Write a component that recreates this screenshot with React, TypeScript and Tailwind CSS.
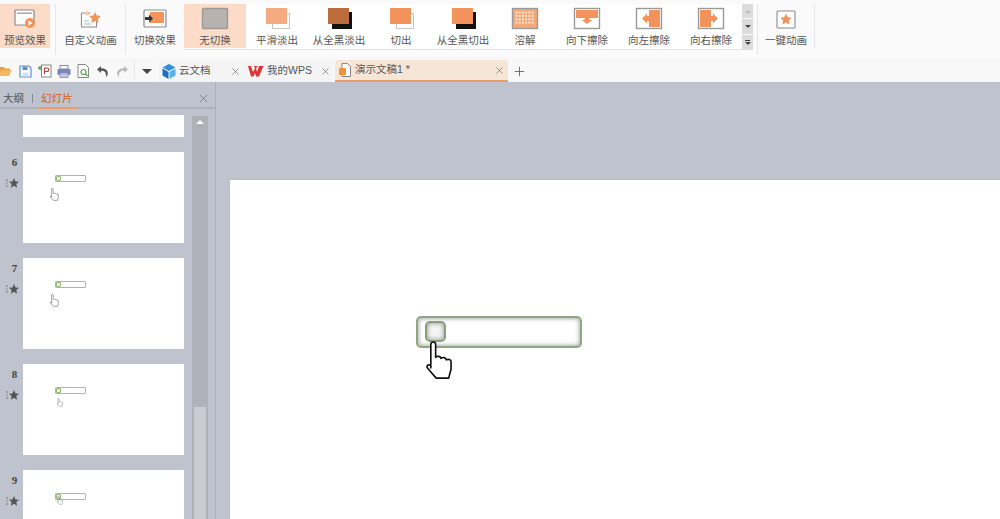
import { Plus, X } from "lucide-react";

const FONT = "font-['Liberation_Sans','Noto_Sans_CJK_SC',sans-serif]";

const ORANGE = "#f2935c";

const GALLERY = [
  { label: "无切换", kind: "none" },
  { label: "平滑淡出", kind: "fade" },
  { label: "从全黑淡出", kind: "fadeBlack" },
  { label: "切出", kind: "cut" },
  { label: "从全黑切出", kind: "cutBlack" },
  { label: "溶解", kind: "dissolve" },
  { label: "向下擦除", kind: "down" },
  { label: "向左擦除", kind: "left" },
  { label: "向右擦除", kind: "right" },
];

const SLIDES = [
  { no: 6, handClass: "left-[27px] top-[36px]", handWidth: 9 },
  { no: 7, handClass: "left-[27px] top-[36px]", handWidth: 9 },
  { no: 8, handClass: "left-[34px] top-[34px]", handWidth: 6 },
  { no: 9, handClass: "left-[34px] top-[26px]", handWidth: 6 },
];

const DISSOLVE_DOTS = Array.from({ length: 24 }, (_, i) => ({ x: 5.5 + (i % 6) * 3.2, y: 4.5 + Math.floor(i / 6) * 3.4 }));

function GalleryIcon({ kind }: { kind: string }) {
  return (
    <svg width="30" height="24" viewBox="0 0 30 24" className="shrink-0">
      {kind === "none" && (
        <rect x="2.500" y="1.500" width="25" height="20" rx="1" fill="#b8b2af" stroke="#9a9a9a" strokeWidth="1.400" />
      )}
      {kind === "fade" && (
        <>
          <rect x="10.500" y="6.500" width="17" height="15" fill="#fff" stroke="#c4c4c4" />
          <rect x="4" y="1" width="21" height="16" fill="#f4ab7f" />
        </>
      )}
      {kind === "fadeBlack" && (
        <>
          <rect x="8" y="5" width="20" height="17" fill="#111" />
          <rect x="4" y="1" width="21" height="16" fill="#bf6c3c" />
        </>
      )}
      {kind === "cut" && (
        <>
          <rect x="10.500" y="6.500" width="17" height="15" fill="#fff" stroke="#c4c4c4" />
          <rect x="4" y="1" width="21" height="16" fill={ORANGE} />
        </>
      )}
      {kind === "cutBlack" && (
        <>
          <rect x="8" y="5" width="20" height="17" fill="#111" />
          <rect x="4" y="1" width="21" height="16" fill={ORANGE} />
        </>
      )}
      {kind === "dissolve" && (
        <>
          <rect x="2.500" y="1.500" width="25" height="20" fill="#f4a878" stroke="#9a9a9a" strokeWidth="1.400" />
          {DISSOLVE_DOTS.map((d) => (
            <rect key={`${d.x}-${d.y}`} x={d.x} y={d.y} width="2" height="2" fill="#fde3d0" />
          ))}
        </>
      )}
      {kind === "down" && (
        <>
          <rect x="2.500" y="1.500" width="25" height="20" fill="#fff" stroke="#9a9a9a" strokeWidth="1.400" />
          <rect x="4" y="3" width="22" height="8" fill={ORANGE} />
          <path d="M12.500 11h5v2h3l-5.500 4-5.500-4h3z" fill={ORANGE} />
        </>
      )}
      {kind === "left" && (
        <>
          <rect x="2.500" y="1.500" width="25" height="20" fill="#fff" stroke="#9a9a9a" strokeWidth="1.400" />
          <rect x="15" y="3" width="11" height="17" fill={ORANGE} />
          <path d="M15 9h-2V6.500l-5 5 5 5V14h2z" fill={ORANGE} />
        </>
      )}
      {kind === "right" && (
        <>
          <rect x="2.500" y="1.500" width="25" height="20" fill="#fff" stroke="#9a9a9a" strokeWidth="1.400" />
          <rect x="4" y="3" width="11" height="17" fill={ORANGE} />
          <path d="M15 9h2V6.500l5 5-5 5V14h-2z" fill={ORANGE} />
        </>
      )}
    </svg>
  );
}

function RibbonButton({ label, className, icon }: { label: string; className: string; icon: React.ReactNode }) {
  return (
    <div className={`flex h-[44px] flex-col items-center ${className}`}>
      <div className="mt-[3px] flex h-[24px] items-center justify-center">{icon}</div>
      <span className="mt-[2px] whitespace-nowrap text-[10.5px] leading-[14px] text-[#555]">{label}</span>
    </div>
  );
}

function Sep({ className = "" }: { className?: string }) {
  return <div className={`w-px bg-[#e6e6e6] ${className}`} />;
}

function Hand({ width, className = "" }: { width: number; className?: string }) {
  return (
    <svg width={width} viewBox="0 0 28 40" className={className}>
      <path
        d="M5 28V3.500a2.500 2.500 0 0 1 5 0V17c2-1.800 5-1.500 5.500 1 2-1.500 5-1 5.500 1.500 2-1 5-.5 5 2V29l-2.500 9.500H10.500L1.500 28c-1.500-3 2-4.500 3.500-2z"
        fill="#fff"
        stroke="#111"
        strokeWidth="1.700"
        strokeLinejoin="round"
      />
    </svg>
  );
}

function SlideThumb({ no, handClass, handWidth }: { no: number; handClass: string; handWidth: number }) {
  return (
    <div className="flex">
      <div className="flex w-[23px] flex-col items-center pl-[6px] pt-[3px]">
        <span className="font-['Liberation_Serif',serif] text-[11px] font-bold leading-[14px] text-[#444]">{no}</span>
        <svg width="14" height="12" viewBox="0 0 14 12" className="mt-[8px] -ml-[4px]">
          <path d="M8 1l1.500 3.500 3.500.3-2.700 2.300.8 3.600L8 8.800 4.900 10.700l.8-3.600L3 4.800l3.500-.3z" fill="#555" />
          <path d="M0 3h2M0 6h1.500M0 9h2" stroke="#777" strokeWidth="1" />
        </svg>
      </div>
      <div className="relative h-[91px] w-[161px] bg-white">
        <div className="absolute left-[32px] top-[23px] h-[7px] w-[31px] rounded-[1px] border border-[#a3c289] bg-white">
          <div className="absolute left-0 top-0 h-[5px] w-[5px] rounded-[1px] border border-[#93b971] bg-[#e9f2df]" />
        </div>
        <Hand width={handWidth} className={`absolute opacity-70 ${handClass}`} />
      </div>
    </div>
  );
}

export default function App() {
  return (
    <div className={`flex h-[519px] w-[1000px] flex-col overflow-hidden bg-[#bfc3cd] ${FONT}`}>
      {/* 리본 */}
      <div className="flex h-[57px] items-start bg-[#fafafa] pt-[4px]">
        <RibbonButton
          label="预览效果"
          className="w-[50px] bg-[#fcdcc8]"
          icon={
            <svg width="22" height="20" viewBox="0 0 22 20">
              <rect x="1" y="1" width="19" height="15" rx="1" fill="#fff" stroke="#8a8a8a" strokeWidth="1.200" />
              <rect x="3" y="3.500" width="15" height="1.500" fill="#aaa" />
              <circle cx="16" cy="14" r="5" fill={ORANGE} />
              <path d="M14.500 11.500l4 2.500-4 2.500z" fill="#fff" />
            </svg>
          }
        />
        <Sep className="ml-[5px] h-[51px]" />
        <RibbonButton
          label="自定义动画"
          className="w-[69px]"
          icon={
            <svg width="24" height="20" viewBox="0 0 24 20">
              <path d="M2.500 4h9M2.500 4v14h15v-6" fill="#fff" stroke="#8a8a8a" strokeWidth="1.100" />
              <path d="M5 12h5M5 15h7" stroke="#9fb7c9" strokeWidth="1.100" />
              <path d="M16 3l1.800 3.600 4 .5-2.900 2.800.7 4-3.600-1.900-3.600 1.900.7-4L10.200 7.100l4-.5z" fill={ORANGE} />
              <path d="M8 1l.9 1.900 2 .3-1.400 1.400.3 2L8 5.700l-1.800.9.300-2L5.100 3.200l2-.3z" fill="#f7c9a8" />
            </svg>
          }
        />
        <Sep className="h-[51px]" />
        <RibbonButton
          label="切换效果"
          className="ml-[4px] w-[50px]"
          icon={
            <svg width="24" height="20" viewBox="0 0 24 20">
              <rect x="1" y="1" width="22" height="17" rx="1" fill="#fff" stroke="#8a8a8a" strokeWidth="1.200" />
              <rect x="7" y="3" width="14" height="11" fill={ORANGE} />
              <path d="M2 8h4V5.500l4 4-4 4V11H2z" fill="#333" />
            </svg>
          }
        />
        <div className="ml-[4px] flex h-[46px] border-b border-[#e4e4e4] bg-white">
          {GALLERY.map((g, i) => (
            <RibbonButton
              key={g.label}
              label={g.label}
              className={`w-[62px] ${i === 0 ? "bg-[#fcdcc8]" : ""}`}
              icon={<GalleryIcon kind={g.kind} />}
            />
          ))}
        </div>
        <div className="flex h-[46px] w-[11px] flex-col gap-px bg-[#fafafa]">
          <div className="flex h-[14px] items-center justify-center bg-[#dcdcdc]">
            <span className="h-0 w-0 border-x-[3px] border-b-[3px] border-x-transparent border-b-[#bbb]" />
          </div>
          <div className="flex h-[15px] items-center justify-center bg-[#dcdcdc]">
            <span className="h-0 w-0 border-x-[3px] border-t-[3px] border-x-transparent border-t-[#444]" />
          </div>
          <div className="flex h-[15px] flex-col items-center justify-center gap-px bg-[#dcdcdc]">
            <span className="h-px w-[5px] bg-[#444]" />
            <span className="h-0 w-0 border-x-[3px] border-t-[3px] border-x-transparent border-t-[#444]" />
          </div>
        </div>
        <Sep className="ml-[4px] h-[51px]" />
        <RibbonButton
          label="一键动画"
          className="w-[56px]"
          icon={
            <svg width="20" height="19" viewBox="0 0 20 19">
              <rect x="1" y="1" width="18" height="17" rx="1" fill="#fff" stroke="#8a8a8a" strokeWidth="1.100" />
              <path d="M10 3.500l1.800 3.700 4 .5-2.900 2.800.7 4-3.600-1.900-3.600 1.900.7-4L4.200 7.700l4-.5z" fill={ORANGE} />
            </svg>
          }
        />
        <Sep className="h-[44px]" />
      </div>

      {/* 빠른 실행 + 탭 */}
      <div className="flex h-[25px] items-stretch bg-[#f8f8f8] pt-[3px]">
        <div className="flex w-[134px] items-center">
          <svg width="13" height="12" viewBox="0 0 13 12" className="ml-[-1px]">
            <path d="M0 2h5l1 1.500h5V5H3L0 11z" fill="#e8a33d" />
            <path d="M3 5h10l-3 6H0z" fill="#f4b860" />
          </svg>
          <svg width="13" height="13" viewBox="0 0 13 13" className="ml-[7px]">
            <path d="M1 1h9l2 2v9H1z" fill="#fff" stroke="#5b8fd1" strokeWidth="1.200" />
            <rect x="3.500" y="1.500" width="5" height="3.500" fill="#5b8fd1" />
            <rect x="3.500" y="7.500" width="6" height="4" fill="#cfe0f3" />
          </svg>
          <svg width="14" height="14" viewBox="0 0 14 14" className="ml-[6px]">
            <rect x="3.500" y="1" width="9.500" height="12" fill="#fff" stroke="#888" />
            <path d="M6.500 10V4h2.500a1.500 1.500 0 0 1 0 3.500H6.500" fill="none" stroke="#b0473a" strokeWidth="1.200" />
            <path d="M0 4h4M2 2v4" stroke="#5aa34a" strokeWidth="1.400" />
          </svg>
          <svg width="14" height="13" viewBox="0 0 14 13" className="ml-[5px]">
            <rect x="3" y="0.500" width="8" height="3.500" fill="#fff" stroke="#8088b8" />
            <rect x="0.500" y="4" width="13" height="6" rx="1" fill="#7d84b5" />
            <rect x="3" y="8" width="8" height="4.500" fill="#c5c9e0" stroke="#8088b8" strokeWidth=".8" />
          </svg>
          <svg width="13" height="14" viewBox="0 0 13 14" className="ml-[6px]">
            <path d="M1 .5h7.500L11.500 3.500v10H1z" fill="#fff" stroke="#888" />
            <circle cx="6.500" cy="8" r="2.500" fill="none" stroke="#5aa34a" strokeWidth="1.200" />
            <path d="M8.500 10l2 2" stroke="#5aa34a" strokeWidth="1.400" />
          </svg>
          <svg width="12" height="11" viewBox="0 0 12 11" className="ml-[7px]">
            <path d="M4 0L0 3.500 4 7V4.800c3-.3 4.800.8 5 4.200l.5 2c2.500-3.500 2-8.500-5.500-8.800z" fill="#555" />
          </svg>
          <svg width="12" height="11" viewBox="0 0 12 11" className="ml-[7px]">
            <path d="M8 0l4 3.500L8 7V4.800c-3-.3-4.800.8-5 4.200l-.5 2C0 7.500.5 2.500 8 2.200z" fill="#bbb" />
          </svg>
        </div>
        <Sep className="mb-[3px]" />
        <div className="ml-[7px] flex w-[16px] items-center">
          <span className="h-0 w-0 border-x-[5px] border-t-[5px] border-x-transparent border-t-[#444]" />
        </div>
        <div className="flex w-[86px] items-center bg-[#f4f4f4] pl-[4px]">
          <svg width="14" height="15" viewBox="0 0 14 15">
            <path d="M7 0l6.500 3.500L7 7 .5 3.500z" fill="#2f8fe0" />
            <path d="M.5 4.500L6.500 8v7L.5 11.500z" fill="#1d6fc0" />
            <path d="M13.500 4.500L7.500 8v7l6-3.500z" fill="#5ab0ee" />
          </svg>
          <span className="ml-[3px] text-[10.5px] text-[#555]">云文档</span>
          <X size={11} strokeWidth={1.300} className="ml-auto mr-[3px] text-[#555]" />
        </div>
        <div className="flex w-[89px] items-center bg-[#f4f4f4] pl-[4px]">
          <svg width="16" height="12" viewBox="0 0 16 12">
            <path d="M0 1h3l2 6 2-4-1-2h4L8 3l1 4 2-6h4.500L11 11.500H8L7 8l-1.500 3.500H3z" fill="#d9363a" />
          </svg>
          <span className="ml-[3px] text-[10.5px] text-[#555]">我的WPS</span>
          <X size={11} strokeWidth={1.300} className="ml-auto mr-[2px] text-[#555]" />
        </div>
        <div className="ml-[2px] flex w-[173px] items-center rounded-t-[2px] border-b-2 border-[#ee9a69] bg-[#f6e6d8] pl-[4px]">
          <svg width="12" height="14" viewBox="0 0 12 14">
            <path d="M3 .5h5.500L11.500 3.500v10H3z" fill="#fff" stroke="#888" />
            <rect x="0" y="5" width="7" height="7" rx="1" fill="#e8963c" />
          </svg>
          <span className="ml-[4px] text-[10.5px] text-[#555]">演示文稿1 *</span>
          <X size={11} strokeWidth={1.300} className="ml-auto mr-[3px] text-[#555]" />
        </div>
        <div className="ml-[4px] flex items-center">
          <Plus size={15} strokeWidth={1.300} className="text-[#555]" />
        </div>
      </div>

      {/* 본문 */}
      <div className="flex min-h-0 flex-1">
        <div className="flex w-[215px] flex-col">
          <div className="flex h-[27px] items-center border-b-2 border-[#afb2bb] pt-[8px] text-[10.5px]">
            <span className="ml-[3px] text-[#555]">大纲</span>
            <span className="mx-[8px] h-[9px] w-px bg-[#8a8d96]" />
            <span className="relative flex h-full items-center font-medium text-[#d0703a]">
              幻灯片
              <span className="absolute -bottom-[2px] -left-[3px] -right-[5px] h-[2px] bg-[#ee9a69]" />
            </span>
            <X size={13} strokeWidth={1} className="ml-auto mr-[5px] text-[#555]" />
          </div>
          <div className="flex min-h-0 flex-1 overflow-hidden">
            <div className="flex w-[184px] flex-col gap-[15px] pt-[6px]">
              <div className="ml-[23px] h-[22px] w-[161px] shrink-0 bg-white" />
              {SLIDES.map((s) => (
                <SlideThumb key={s.no} {...s} />
              ))}
            </div>
            <div className="ml-[8px] mt-[7px] flex w-[16px] flex-col items-center bg-[#aeb1b7]">
              <span className="mt-[4px] h-0 w-0 border-x-[4px] border-b-[4px] border-x-transparent border-b-white" />
              <div className="mt-auto h-[112px] w-[12px] bg-[#c9cdd2]" />
            </div>
          </div>
        </div>
        <div className="w-px bg-[#aeb1ba]" />
        <div className="min-w-0 flex-1 pl-[14px] pt-[98px]">
          <div className="relative h-[400px] bg-white shadow-[0_0_2px_#a9acb5]">
            <div className="absolute left-[186px] top-[136px] h-[32px] w-[166px] rounded-[5px] border-2 border-[#8fa883] bg-white shadow-[inset_0_0_5px_#8a8a8a]">
              <div className="absolute left-[7px] top-[3px] h-[21px] w-[21px] rounded-[5px] border-2 border-[#87a07b] bg-[#f4f4f4] shadow-[inset_0_0_5px_#888]" />
            </div>
            <Hand width={27} className="absolute left-[196px] top-[161px]" />
          </div>
        </div>
      </div>
    </div>
  );
}
